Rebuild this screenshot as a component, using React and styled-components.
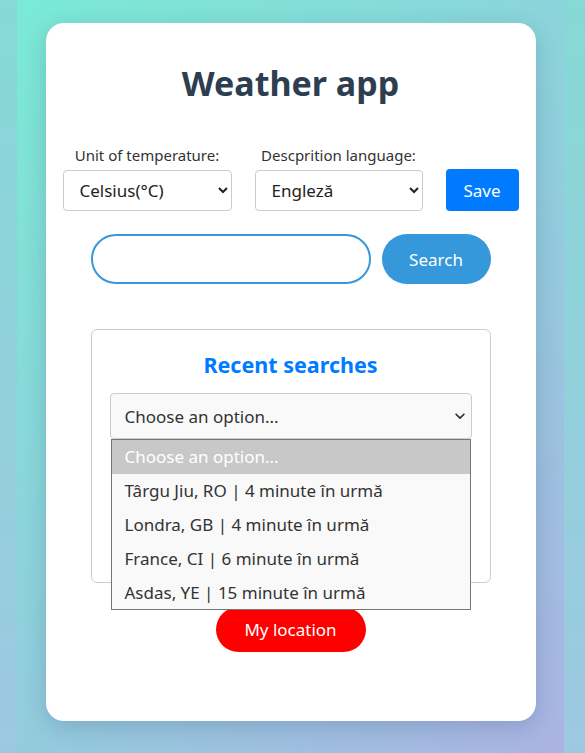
import {Component} from 'react'

import styled, {createGlobalStyle} from 'styled-components'

const recent = [
  'Târgu Jiu, RO | 4 minute în urmă',
  'Londra, GB | 4 minute în urmă',
  'France, CI | 6 minute în urmă',
  'Asdas, YE | 15 minute în urmă',
]

export default class App extends Component {
  state = {
    city: '',
  }

  getCity = e => {
    this.setState({city: e.target.value})
  }

  render() {
    const {city} = this.state
    return (
      <>
        <GlobalStyle />
        <Page>
          <Card>
            <Heading>Weather app</Heading>
            <SettingsRow>
              <Field>
                <Label>Unit of temperature:</Label>
                <Select defaultValue="c" width="169px">
                  <option value="c">Celsius(°C)</option>
                  <option value="f">Fahrenheit(°F)</option>
                </Select>
              </Field>
              <Field>
                <Label>Descprition language:</Label>
                <Select defaultValue="en" width="168px">
                  <option value="en">Engleză</option>
                  <option value="ro">Română</option>
                </Select>
              </Field>
              <SaveButton>Save</SaveButton>
            </SettingsRow>
            <SearchRow>
              <SearchInput value={city} onChange={this.getCity} />
              <PillButton bg="#3498db" width="109px" height="50px">
                Search
              </PillButton>
            </SearchRow>
            <RecentBox>
              <RecentTitle>Recent searches</RecentTitle>
              <DropWrap>
                <RecentSelect>
                  <span>Choose an option...</span>
                  <Chevron viewBox="0 0 16 16">
                    <path
                      d="M3.5 6 L8 10.5 L12.5 6"
                      fill="none"
                      stroke="#333"
                      strokeWidth="2"
                      strokeLinecap="round"
                      strokeLinejoin="round"
                    />
                  </Chevron>
                </RecentSelect>
                <OptionList>
                  <OptionItem active>Choose an option...</OptionItem>
                  {recent.map(item => (
                    <OptionItem key={item}>{item}</OptionItem>
                  ))}
                </OptionList>
              </DropWrap>
            </RecentBox>
            <PillButton bg="#ff0000" width="150px" height="45px">
              My location
            </PillButton>
          </Card>
        </Page>
      </>
    )
  }
}

const GlobalStyle = createGlobalStyle`
  body {
    margin: 0;
    font-family: "Noto Sans", "Open Sans", sans-serif;
    background: linear-gradient(180deg, #86d9d6 0%, #9dc8e1 100%);
  }
`

const Page = styled.div`
  width: 547px;
  min-height: 753px;
  margin-left: 17px;
  padding-top: 23px;
  box-sizing: border-box;
  background: linear-gradient(135deg, #7aead5 0%, #8fd0dc 50%, #abb3e3 100%);
  display: flex;
  justify-content: center;
  align-items: flex-start;
`

const Card = styled.div`
  width: 490px;
  height: 698px;
  box-sizing: border-box;
  background-color: #ffffff;
  border-radius: 18px;
  box-shadow: 0 6px 22px rgba(40, 70, 110, 0.22);
  display: flex;
  flex-direction: column;
  align-items: center;
  padding-top: 36px;
`

const Heading = styled.h1`
  margin: 0;
  font-size: 34px;
  line-height: 48px;
  font-weight: 700;
  color: #2c3e50;
`

const SettingsRow = styled.div`
  display: flex;
  align-items: flex-end;
  gap: 23px;
  margin-top: 38px;
`

const Field = styled.div`
  display: flex;
  flex-direction: column;
  align-items: center;
  gap: 5px;
`

const Label = styled.label`
  font-size: 15px;
  line-height: 20px;
  color: #333333;
`

const Select = styled.select`
  width: ${props => props.width};
  height: 41px;
  padding: 0 12px;
  font-family: inherit;
  font-size: 17px;
  color: #222222;
  background-color: #ffffff;
  border: 1px solid #cccccc;
  border-radius: 4px;
`

const SaveButton = styled.button`
  width: 73px;
  height: 42px;
  border: 0;
  border-radius: 4px;
  background-color: #007bff;
  color: #ffffff;
  font-family: inherit;
  font-size: 17px;
  cursor: pointer;
`

const SearchRow = styled.div`
  display: flex;
  gap: 11px;
  margin-top: 23px;
`

const SearchInput = styled.input`
  width: 280px;
  height: 50px;
  box-sizing: border-box;
  border: 2px solid #3498db;
  border-radius: 25px;
  padding: 0 16px;
  font-family: inherit;
  font-size: 17px;
  outline: none;
`

const PillButton = styled.button`
  width: ${props => props.width};
  height: ${props => props.height};
  border: 0;
  border-radius: 25px;
  background-color: ${props => props.bg};
  color: #ffffff;
  font-family: inherit;
  font-size: 17px;
  cursor: pointer;
`

const RecentBox = styled.div`
  width: 400px;
  height: 254px;
  box-sizing: border-box;
  margin-top: 45px;
  margin-bottom: 24px;
  border: 1px solid #cccccc;
  border-radius: 6px;
  display: flex;
  flex-direction: column;
  align-items: center;
  padding-top: 20px;
`

const RecentTitle = styled.h2`
  margin: 0;
  font-size: 21.5px;
  line-height: 30px;
  font-weight: 700;
  color: #007bff;
`

const DropWrap = styled.div`
  position: relative;
  margin-top: 13px;
`

const RecentSelect = styled.div`
  width: 362px;
  height: 46px;
  box-sizing: border-box;
  padding: 0 4px 0 14px;
  background-color: #f9f9f9;
  border: 1px solid #cccccc;
  border-radius: 4px;
  display: flex;
  align-items: center;
  justify-content: space-between;
  font-size: 17px;
  color: #333333;
`

const Chevron = styled.svg`
  width: 14px;
  height: 14px;
`

const OptionList = styled.ul`
  position: absolute;
  top: 46px;
  left: 1px;
  width: 360px;
  height: 171px;
  box-sizing: border-box;
  margin: 0;
  padding: 0;
  list-style: none;
  overflow: hidden;
  background-color: #f9f9f9;
  border: 1px solid #767676;
  z-index: 2;
`

const OptionItem = styled.li`
  height: 34px;
  line-height: 34px;
  padding-left: 13px;
  font-size: 17px;
  white-space: nowrap;
  color: ${props => (props.active ? '#ffffff' : '#333333')};
  background-color: ${props => (props.active ? '#c8c8c8' : 'transparent')};
`
